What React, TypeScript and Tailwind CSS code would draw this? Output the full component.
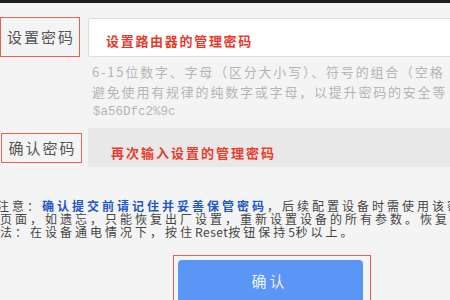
import React from "react";

const CJK = { fontFamily: '"Noto Sans CJK SC", "Noto Sans", sans-serif' };

export default function App() {
  return (
    <div className="w-[450px] h-[300px] overflow-hidden bg-[#f4f4f4] text-[#555]" style={CJK}>
      <div className="h-[3px] bg-[#1e1e1e]" />

      {/* 设置密码 */}
      <div className="mt-[14px] flex items-start">
        <div className="w-[80px] h-[40px] shrink-0 border-[1.5px] border-[#e2644f] flex items-center justify-center pl-[2px] text-[15px] tracking-[2px] text-[#555]">
          设置密码
        </div>
        <div className="ml-[8px] mt-[1px] w-[400px] h-[39px] shrink-0 bg-white border border-[#dcdcdc] rounded-[2px] flex items-center pl-[17px] pt-[7px] text-[13px] leading-[16px] tracking-[1.7px] font-bold text-[#e8392b]">
          设置路由器的管理密码
        </div>
      </div>

      {/* hint */}
      <div className="mt-[5px] ml-[92px] whitespace-nowrap text-[13px] leading-[20px] tracking-[1.8px] text-[#b4b4b4]">
        <div>6-15位数字、字母（区分大小写）、符号的组合（空格</div>
        <div>避免使用有规律的纯数字或字母，以提升密码的安全等</div>
        <div className="text-[12.5px] tracking-normal pl-[1px]" style={{ fontFamily: '"Liberation Mono", monospace' }}>
          $a56Dfc2%9c
        </div>
      </div>

      {/* 确认密码 */}
      <div className="mt-[6px] flex items-start">
        <div className="mt-[5px] ml-[1px] w-[81px] h-[30px] shrink-0 border-[1.5px] border-[#e2644f] flex items-center justify-center pl-[2px] text-[15px] tracking-[2px] text-[#555]">
          确认密码
        </div>
        <div className="ml-[6px] w-[400px] h-[39px] shrink-0 bg-[#e8e8e8] rounded-[2px] flex items-center pl-[23px] pt-[11px] text-[13px] leading-[16px] tracking-[2px] font-bold text-[#ea3b2b]">
          再次输入设置的管理密码
        </div>
      </div>

      {/* notes */}
      <div className="mt-[32px] -ml-[3px] whitespace-nowrap text-[12px] leading-[13px] tracking-[3px] text-[#444]">
        <div>
          注意：<span className="font-bold text-[#2156c8]">确认提交前请记住并妥善保管密码</span>，后续配置设备时需使用该密码登录管理
        </div>
        <div className="pl-[3px]">页面，如遗忘，只能恢复出厂设置，重新设置设备的所有参数。恢复出厂设置的方</div>
        <div className="pl-[3px]">
          法：在设备通电情况下，按住<span className="tracking-[0.5px]">Reset</span>按钮保持<span className="tracking-[0.5px]">5</span>秒以上。
        </div>
      </div>

      {/* button */}
      <div className="mt-[17px] ml-[173px] w-[198px] h-[60px] border-[1.5px] border-[#e2644f] pl-[3.5px] pr-[7.5px] pt-[3.5px]">
        <div className="h-[50px] rounded-[4px] bg-[#5b95f5] flex justify-center pt-[13px] pr-[1px] text-[15px] leading-[16px] tracking-[3px] text-[#eef4ff]">
          确认
        </div>
      </div>
    </div>
  );
}
